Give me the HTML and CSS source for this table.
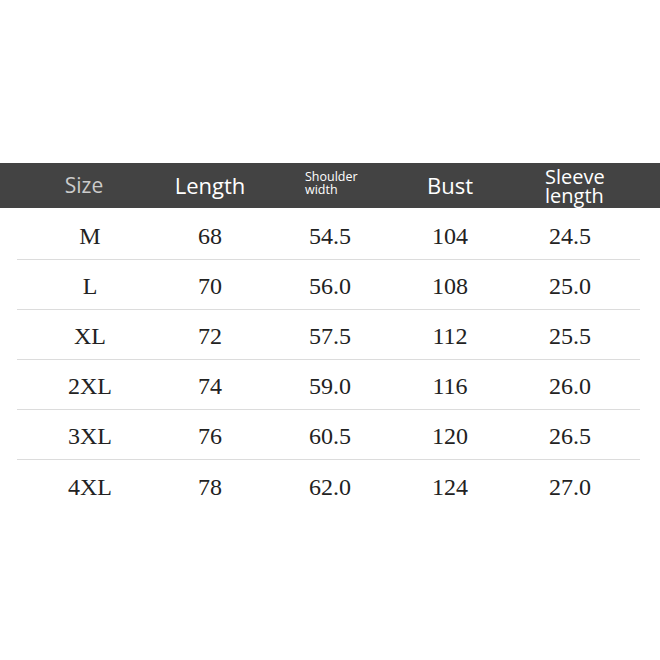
FILE: index.html
```html
<!DOCTYPE html>
<html>
<head>
<meta charset="utf-8">
<link rel="stylesheet" href="styles.css">
</head>
<body>
<div class="page">
  <div class="head">
    <div class="h h-size">Size</div>
    <div class="h">Length</div>
    <div class="h h-small">Shoulder width</div>
    <div class="h">Bust</div>
    <div class="h h-two">Sleeve length</div>
  </div>
  <div class="body">
    <div class="row"><span>M</span><span>68</span><span>54.5</span><span>104</span><span>24.5</span></div>
    <div class="row"><span>L</span><span>70</span><span>56.0</span><span>108</span><span>25.0</span></div>
    <div class="row"><span>XL</span><span>72</span><span>57.5</span><span>112</span><span>25.5</span></div>
    <div class="row"><span>2XL</span><span>74</span><span>59.0</span><span>116</span><span>26.0</span></div>
    <div class="row"><span>3XL</span><span>76</span><span>60.5</span><span>120</span><span>26.5</span></div>
    <div class="row last"><span>4XL</span><span>78</span><span>62.0</span><span>124</span><span>27.0</span></div>
  </div>
</div>
</body>
</html>
```

FILE: styles.css
```css
html, body {
  margin: 0;
  padding: 0;
  background: #ffffff;
}
.page {
  width: 660px;
  height: 660px;
  padding-top: 163px;
  box-sizing: border-box;
}
.head {
  height: 45px;
  background: #434343;
  display: grid;
  grid-template-columns: 30px repeat(5, 120px) 30px;
  font-family: "Open Sans", "Noto Sans", sans-serif;
  color: #ffffff;
}
.h {
  font-size: 22px;
  line-height: 45px;
  text-align: center;
  white-space: nowrap;
}
.h:nth-child(1) { grid-column: 2; }
.h:nth-child(2) { grid-column: 3; }
.h:nth-child(3) { grid-column: 4; }
.h:nth-child(4) { grid-column: 5; }
.h:nth-child(5) { grid-column: 6; }
.h-size {
  color: #cbcbcb;
  padding-right: 12px;
  font-size: 21px;
}
.h-small {
  font-size: 12.5px;
  line-height: 13px;
  text-align: left;
  white-space: normal;
  margin-left: 35px;
  width: 62px;
  padding-top: 7px;
}
.h-two {
  font-size: 20px;
  line-height: 19px;
  text-align: left;
  white-space: normal;
  margin-left: 35px;
  width: 70px;
  padding-top: 4px;
}
.body {
  margin: 2px 20px 0 17px;
}
.row {
  height: 50px;
  box-sizing: border-box;
  border-bottom: 1px solid #dcdcdc;
  display: grid;
  grid-template-columns: 13px repeat(5, 120px);
  font-family: "Liberation Serif", "Times New Roman", serif;
  font-size: 24px;
  color: #222222;
  align-items: center;
  padding-top: 4px;
}
.row.last {
  border-bottom: none;
}
.row span {
  text-align: center;
}
.row span:nth-child(1) { grid-column: 2; }
.row span:nth-child(2) { grid-column: 3; }
.row span:nth-child(3) { grid-column: 4; }
.row span:nth-child(4) { grid-column: 5; }
.row span:nth-child(5) { grid-column: 6; }
```
